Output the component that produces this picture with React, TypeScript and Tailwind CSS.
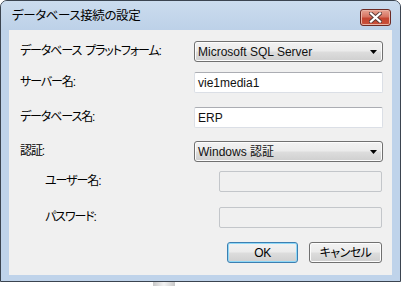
import React from 'react';

const UI_FONT = "font-['Liberation_Sans','Noto_Sans_CJK_JP',sans-serif]";

const Label: React.FC<{ text: React.ReactNode; width: number }> = ({ text, width }) => (
  <div
    className="shrink-0 text-[12px] leading-[21px] tracking-[-1.1px] text-black [font-feature-settings:'palt']"
    style={{ width }}
  >
    {text}
  </div>
);

const ComboBox: React.FC<{ value: string }> = ({ value }) => (
  <div className="relative flex h-[21px] w-[189px] items-center rounded-[3px] border border-[#707070] bg-[linear-gradient(to_bottom,#f2f2f2_0%,#ebebeb_48%,#dddddd_52%,#cfcfcf_100%)] pl-[3px] shadow-[inset_0_0_0_1px_#fcfcfc]">
    <span className="text-[12px] leading-none text-[#111]">{value}</span>
    <svg className="absolute right-[5px] top-[8px]" width="7" height="4" viewBox="0 0 7 4">
      <path d="M0 0H7L3.5 4Z" fill="#000" />
    </svg>
  </div>
);

const TextBox: React.FC<{ value?: string; disabled?: boolean; width: number }> = ({ value, disabled, width }) => (
  <div
    className={
      disabled
        ? 'h-[21px] rounded-[2px] border border-[#c3c6ca] bg-[#f0f0f0]'
        : 'flex h-[21px] items-center rounded-[2px] border border-[#dbdfe6] border-t-[#abadb3] bg-white pl-[3px]'
    }
    style={{ width }}
  >
    {value && <span className="text-[12px] leading-none text-[#111]">{value}</span>}
  </div>
);

const Button: React.FC<{ text: string; primary?: boolean; width: number }> = ({ text, primary, width }) => (
  <div
    className={
      'flex h-[21px] items-center justify-center rounded-[3px] border bg-[linear-gradient(to_bottom,#f2f2f2_0%,#ebebeb_48%,#dddddd_52%,#cfcfcf_100%)] text-[12px] tracking-[-0.5px] text-black [font-feature-settings:"palt"] ' +
      (primary
        ? 'border-[#3c7fb1] shadow-[inset_0_0_0_1px_#8fd8f7]'
        : 'border-[#707070] shadow-[inset_0_0_0_1px_#fcfcfc]')
    }
    style={{ width }}
  >
    {text}
  </div>
);

const CloseButton: React.FC = () => (
  <div className="flex h-[17px] w-[31px] items-center justify-center rounded-[3px] border border-[#6d2a24] bg-[linear-gradient(to_bottom,#e8a493_0%,#d77462_45%,#c44530_55%,#c9503a_100%)] shadow-[inset_0_0_0_1px_#eab3a5]">
    <svg width="13" height="11" viewBox="0 0 13 11">
      <path
        d="M2 1.5L11 9.5M11 1.5L2 9.5"
        stroke="#5a3a36"
        strokeWidth="4"
        strokeLinecap="square"
      />
      <path
        d="M2 1.5L11 9.5M11 1.5L2 9.5"
        stroke="#ffffff"
        strokeWidth="2.2"
        strokeLinecap="square"
      />
    </svg>
  </div>
);

export default function App() {
  return (
    <div className={`relative h-[286px] w-[403px] overflow-hidden bg-white ${UI_FONT}`}>
      {/* window */}
      <div className="flex h-[282px] w-[401px] flex-col rounded-t-[7px] border border-[#3b4450] bg-[#bfd3ea]">
        {/* title bar */}
        <div className="flex h-[29px] shrink-0 items-start justify-between rounded-t-[6px] bg-[linear-gradient(to_bottom,#cbdcee_0%,#bdd1e8_100%)] pl-[11px] pr-[9px]">
          <div className="pt-[6px] text-[12.5px] leading-[18px] tracking-[-0.4px] text-black [font-feature-settings:'palt']">
            データベース接続の設定
          </div>
          <div className="pt-[8px]">
            <CloseButton />
          </div>
        </div>

        {/* client area */}
        <div className="mx-[8px] flex h-[245px] flex-col bg-[#f0f0f0]">
          <div className="mt-[11px] flex pl-[11px]">
            <Label
              text={
                <>
                  データベース<span className="ml-[4px]">プラットフォーム:</span>
                </>
              }
              width={174}
            />
            <ComboBox value="Microsoft SQL Server" />
          </div>
          <div className="mt-[10px] flex pl-[11px]">
            <Label text="サーバー名:" width={174} />
            <TextBox value="vie1media1" width={189} />
          </div>
          <div className="mt-[14px] flex pl-[11px]">
            <Label text="データベース名:" width={174} />
            <TextBox value="ERP" width={189} />
          </div>
          <div className="mt-[13px] flex pl-[11px]">
            <Label text="認証:" width={174} />
            <ComboBox value="Windows 認証" />
          </div>
          <div className="mt-[9px] flex pl-[36px]">
            <Label text="ユーザー名:" width={174} />
            <TextBox disabled width={163} />
          </div>
          <div className="mt-[15px] flex pl-[36px]">
            <Label text="パスワード:" width={174} />
            <TextBox disabled width={163} />
          </div>
          <div className="mt-[14px] flex gap-[11px] pl-[218px]">
            <Button text="OK" primary width={71} />
            <Button text="キャンセル" width={73} />
          </div>
        </div>
      </div>

      {/* background peeking below the window */}
      <div className="absolute left-[153px] top-[282px] h-[4px] w-[22px] bg-[linear-gradient(to_right,#c8c8c8,#f4f4f4,#c8c8c8)]" />
    </div>
  );
}
